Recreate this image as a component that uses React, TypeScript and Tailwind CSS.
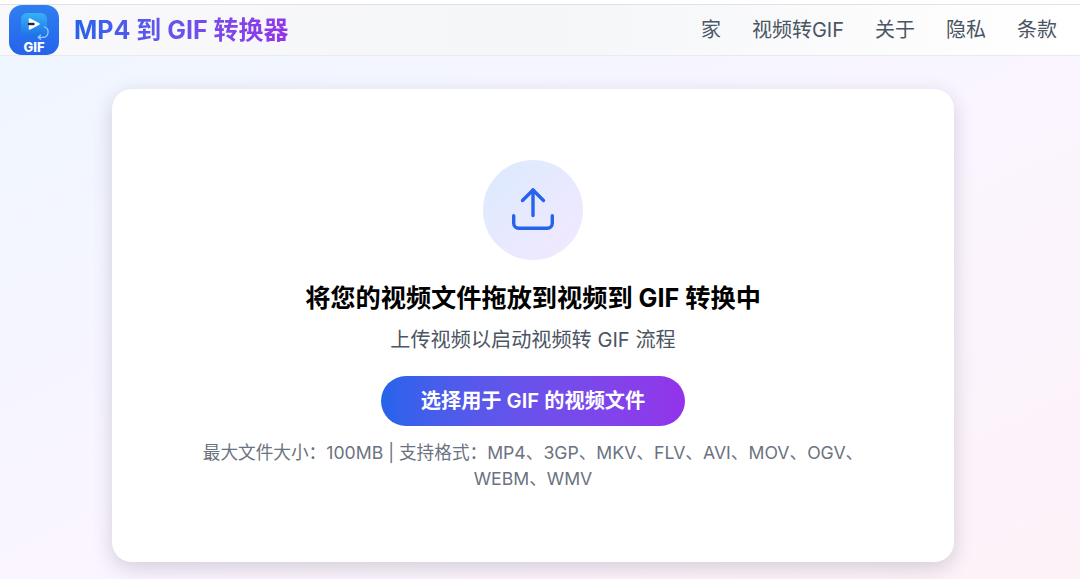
const font = "font-['Inter','Noto_Sans_CJK_SC',sans-serif]";

const navLinks = [
  { label: "家" },
  { label: "视频转GIF" },
  { label: "关于" },
  { label: "隐私" },
  { label: "条款" },
];

function Logo() {
  return (
    <div className="w-[50px] h-[50px] rounded-[13px] bg-gradient-to-b from-[#2f7ff0] to-[#2563eb] flex flex-col items-center pt-[7px] pl-[1px] shrink-0">
      <svg width="30" height="28" viewBox="0 0 30 28" className="block">
        <defs>
          <linearGradient id="tile" x1="0" y1="0" x2="0" y2="1">
            <stop offset="0" stopColor="#36b2f6" />
            <stop offset="1" stopColor="#1f6fe8" />
          </linearGradient>
        </defs>
        <rect x="1" y="1" width="26" height="24" rx="6" fill="url(#tile)" />
        <path d="M9.5 7 L19 12 L9.5 17 Z" fill="#fff" stroke="#fff" strokeWidth="1.5" strokeLinejoin="round" />
        <rect x="8" y="10.8" width="6.5" height="2.4" fill="#1f2937" />
        <path d="M24.5 15 a5.3 5.3 0 0 1 -2 10.3 h-4" fill="none" stroke="#8fd0fa" strokeWidth="1.3" strokeLinecap="round" />
        <path d="M20.5 23.3 l-2.3 2 l2.3 2" fill="none" stroke="#8fd0fa" strokeWidth="1.3" strokeLinecap="round" />
      </svg>
      <span className="text-[13px] leading-[13px] font-extrabold text-white mt-[1px] mr-[1px]">GIF</span>
    </div>
  );
}

export default function App() {
  return (
    <div className={`${font} w-[1080px] h-[579px] overflow-hidden flex flex-col bg-white`}>
      <div className="h-[5px] shrink-0 bg-white border-b border-[#e2e2e4]" />
      <header className="h-[51px] shrink-0 bg-gradient-to-r from-[#f9f9fb] via-[#f5f6f8] to-white border-b border-[#e9e9ef] flex items-center justify-between pl-[9px] pr-[23px]">
        <div className="flex items-center gap-[15px]">
          <Logo />
          <span className="text-[25px] leading-[32px] font-bold bg-gradient-to-r from-[#2563eb] to-[#9333ea] bg-clip-text text-transparent">
            MP4 到 GIF 转换器
          </span>
        </div>
        <nav className="flex items-center gap-[31px]">
          {navLinks.map((link) => (
            <a key={link.label} className="text-[20px] leading-[28px] text-[#4b5563]">
              {link.label}
            </a>
          ))}
        </nav>
      </header>

      <main className="flex-1 bg-gradient-to-br from-[#eff6ff] via-[#faf5ff] to-[#fdf2f8] flex justify-center pt-[33px] pr-[14px]">
        <div className="w-[842px] h-[473px] shrink-0 bg-white rounded-[20px] shadow-[0_6px_20px_rgba(40,30,60,0.18)] flex flex-col items-center pt-[71px]">
          <div className="w-[100px] h-[100px] rounded-full bg-gradient-to-br from-[#dbeafe] to-[#f3e8ff] flex items-center justify-center">
            <svg width="48" height="48" viewBox="0 0 48 48" fill="none" stroke="#2563eb" strokeWidth="3.4" strokeLinecap="round" strokeLinejoin="round">
              <path d="M4.7 29.7v7.6a5 5 0 0 0 5 5h28.6a5 5 0 0 0 5-5v-7.6" />
              <path d="M13.5 14.5 24 4l10.5 10.5" />
              <path d="M24 4v25.5" />
            </svg>
          </div>
          <h2 className="mt-[20px] text-[25.2px] leading-[36px] font-bold text-black">
            将您的视频文件拖放到视频到 GIF 转换中
          </h2>
          <p className="mt-[10px] text-[20.15px] leading-[28px] text-[#4b5563]">
            上传视频以启动视频转 GIF 流程
          </p>
          <button className="mt-[22px] w-[304px] h-[50px] rounded-full bg-gradient-to-r from-[#2563eb] to-[#9333ea] text-white text-[20.2px] font-semibold">
            选择用于 GIF 的视频文件
          </button>
          <p className="mt-[14px] w-[670px] text-center text-[17.65px] leading-[26px] text-[#6b7280]">
            最大文件大小：100MB | 支持格式：MP4、3GP、MKV、FLV、AVI、MOV、OGV、WEBM、WMV
          </p>
        </div>
      </main>
    </div>
  );
}
